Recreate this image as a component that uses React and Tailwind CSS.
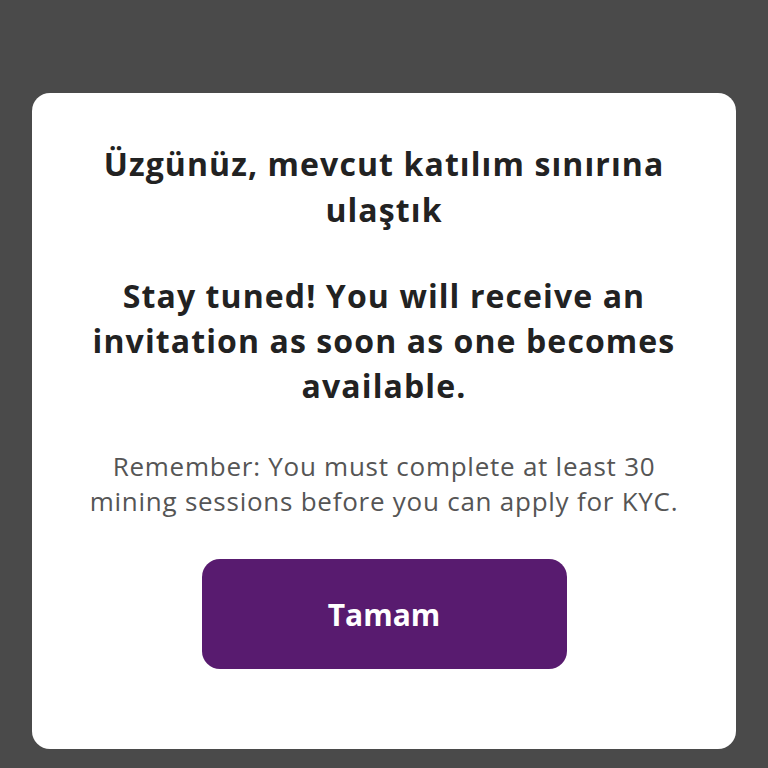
export default function App() {
  return (
    <div className="w-[768px] h-[768px] bg-[#4a4a4a] flex flex-col items-center pt-[93px]" style={{ fontFamily: "'Open Sans', 'Noto Sans', sans-serif" }}>
      <div className="w-[704px] h-[656px] bg-white rounded-[18px] flex flex-col items-center pt-[48px]">
        <h1 className="text-[32px] leading-[46px] font-bold tracking-[1.1px] text-[#222222] text-center whitespace-nowrap">
          Üzgünüz, mevcut katılım sınırına
          <br />
          ulaştık
        </h1>
        <p className="mt-[40px] text-[32px] leading-[45px] font-bold tracking-[1.1px] text-[#222222] text-center whitespace-nowrap">
          Stay tuned! You will receive an
          <br />
          invitation as soon as one becomes
          <br />
          available.
        </p>
        <p className="mt-[41px] text-[26px] leading-[35px] tracking-[0.75px] text-[#555555] text-center whitespace-nowrap">
          Remember: You must complete at least 30
          <br />
          mining sessions before you can apply for KYC.
        </p>
        <button className="mt-[40px] w-[365px] h-[110px] rounded-[18px] bg-[#581b6f] text-white text-[30px] font-bold">
          Tamam
        </button>
      </div>
    </div>
  );
}
